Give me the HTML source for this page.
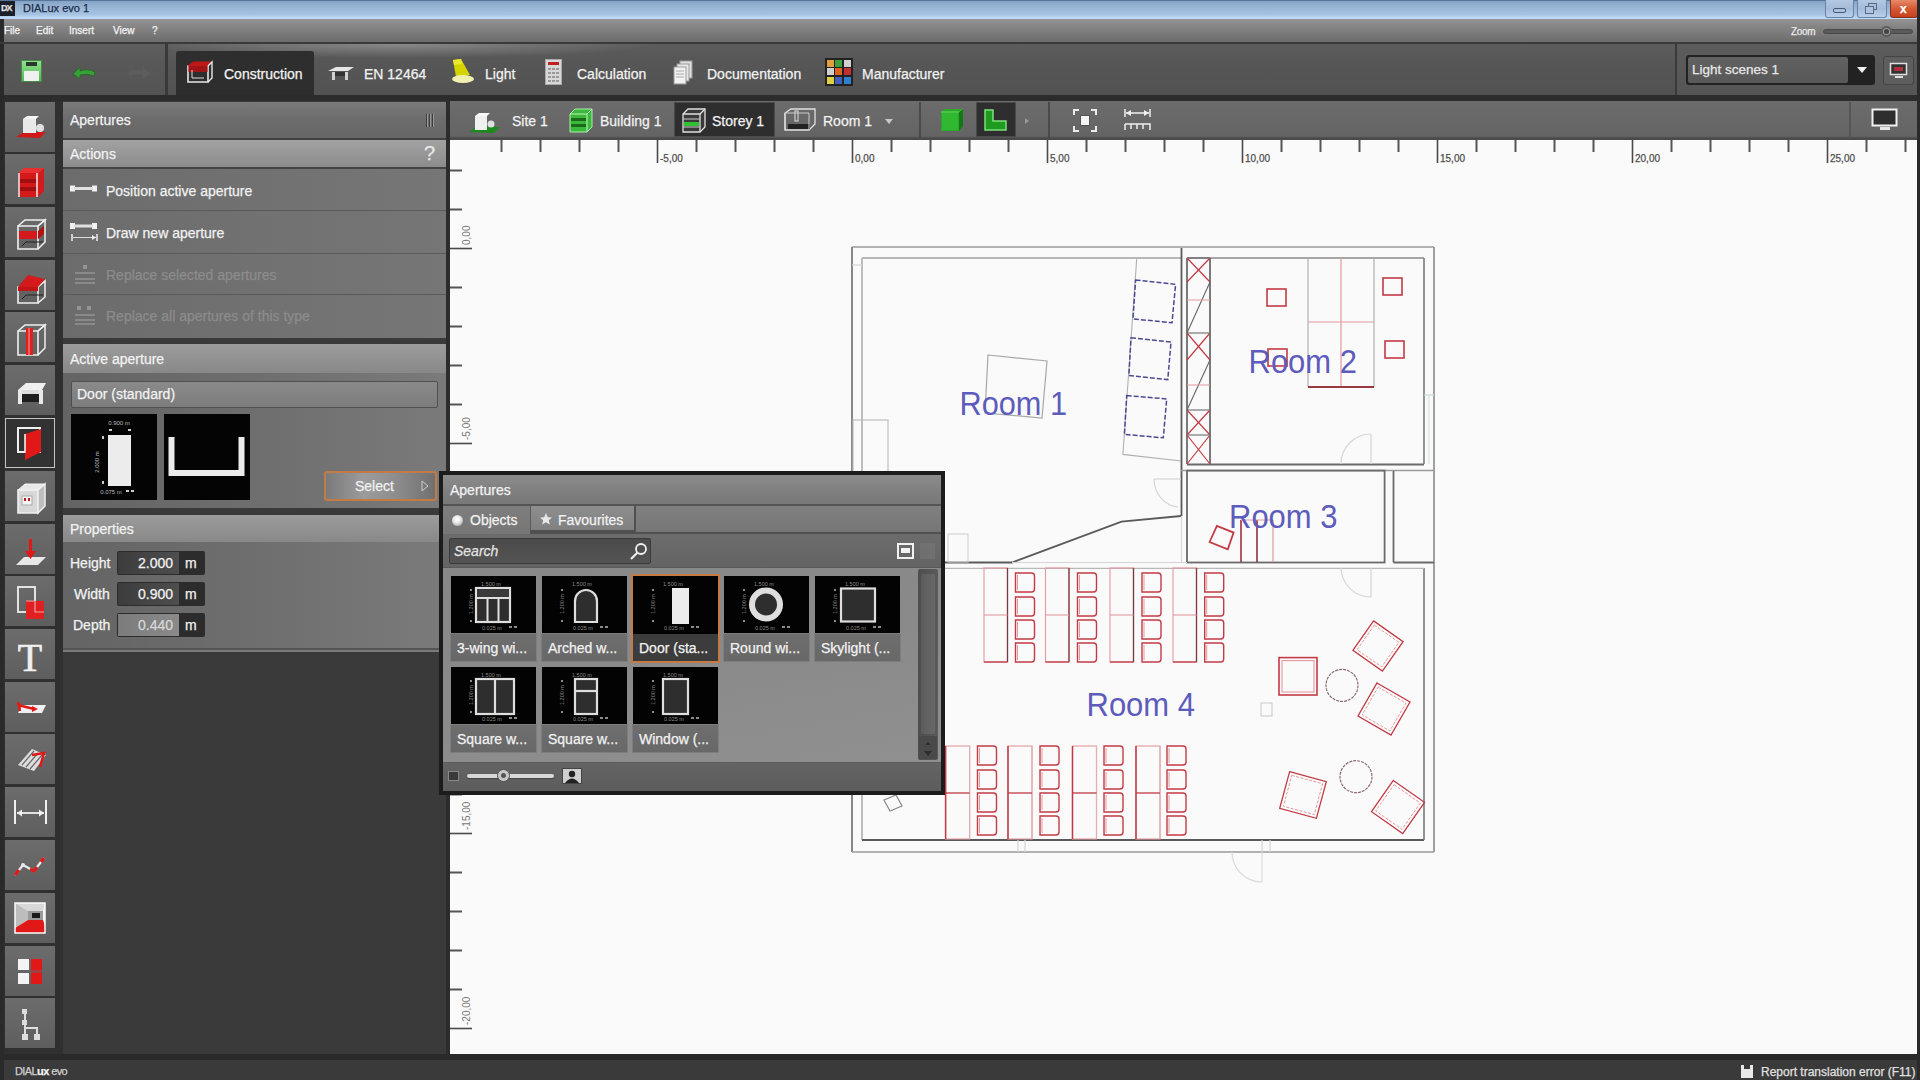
<!DOCTYPE html>
<html><head><meta charset="utf-8">
<style>
*{margin:0;padding:0;box-sizing:border-box}
html,body{width:1920px;height:1080px;overflow:hidden;background:#2e2e2e;font-family:"Liberation Sans",sans-serif;}
.a{position:absolute}
.t{position:absolute;white-space:nowrap;color:#f2f2f2;line-height:1;-webkit-text-stroke:0.25px currentColor;}
svg{position:absolute;overflow:visible}
.lb{position:absolute;left:5px;width:50px;height:50px;background:linear-gradient(#6c6c6c,#5e5e5e);}
</style></head><body>
<!-- ============ TITLE BAR ============ -->
<div class="a" style="left:0;top:0;width:1920px;height:19px;background:linear-gradient(#3e5e86 0,#86a4c6 1.5px,#98b4d3 35%,#a6c2e2 75%,#bad6f4 92%,#c4def8 100%);"></div>
<div class="a" style="left:0;top:1px;width:15px;height:15px;background:#1b1f2a"></div>
<div class="t" style="left:1px;top:4px;font-size:9px;font-weight:bold;color:#e0e0e0;letter-spacing:-1px">DX</div>
<div class="t" style="left:23px;top:3px;font-size:11px;color:#1c2c4a">DIALux evo 1</div>
<div class="a" style="left:1825px;top:0;width:29px;height:18px;border:1px solid #6a84a8;border-top:none;border-radius:0 0 3px 3px;background:linear-gradient(#b4c8e2,#a4bcda 50%,#b8d0ec)"></div>
<div class="a" style="left:1833px;top:8px;width:13px;height:5px;border:1.5px solid #4a5a72;border-radius:2px"></div>
<div class="a" style="left:1857px;top:0;width:30px;height:18px;border:1px solid #6a84a8;border-top:none;border-radius:0 0 3px 3px;background:linear-gradient(#b4c8e2,#a4bcda 50%,#b8d0ec)"></div>
<div class="a" style="left:1868px;top:3px;width:9px;height:7px;border:1.5px solid #5a6a80"></div>
<div class="a" style="left:1865px;top:6px;width:9px;height:8px;border:1.5px solid #5a6a80;background:#aec4e0"></div>
<div class="a" style="left:1890px;top:0;width:28px;height:18px;border:1px solid #8a3020;border-top:none;border-radius:0 0 3px 3px;background:linear-gradient(#e88a6a,#d45a34 50%,#c8401c)"></div>
<div class="t" style="left:1900px;top:3px;font-size:12px;font-weight:bold;color:#fff">x</div>
<div class="a" style="left:1917px;top:0;width:3px;height:1080px;background:#2a2a2a"></div>

<!-- ============ MENU BAR ============ -->
<div class="a" style="left:0;top:19px;width:1917px;height:23px;background:linear-gradient(#949494,#848484 35%,#6c6c6c 100%);"></div>
<div class="a" style="left:0;top:19px;width:4px;height:1061px;background:#2a2a2a"></div>
<div class="t" style="left:4px;top:26px;font-size:10px;color:#f4f4f4">File</div>
<div class="t" style="left:36px;top:26px;font-size:10px;color:#f4f4f4">Edit</div>
<div class="t" style="left:69px;top:26px;font-size:10px;color:#f4f4f4">Insert</div>
<div class="t" style="left:113px;top:26px;font-size:10px;color:#f4f4f4">View</div>
<div class="t" style="left:152px;top:26px;font-size:10px;color:#f4f4f4">?</div>
<div class="t" style="left:1791px;top:27px;font-size:10px;color:#eaeaea;letter-spacing:-0.3px">Zoom</div>
<div class="a" style="left:1823px;top:29px;width:90px;height:5px;border-radius:3px;background:#5a5a5a;border:1px solid #4a4a4a"></div>
<div class="a" style="left:1881px;top:26px;width:11px;height:11px;border-radius:50%;background:#9a9a9a;border:2px solid #5c5c5c"></div>
<div class="a" style="left:1884px;top:29px;width:5px;height:5px;border-radius:50%;background:#444"></div>

<!-- ============ MAIN TOOLBAR ============ -->
<div class="a" style="left:0;top:42px;width:1917px;height:2px;background:#3a3a3a"></div>
<div class="a" style="left:4px;top:44px;width:1913px;height:51px;background:linear-gradient(#5e5e5e,#585858 40%,#545454);"></div>
<div class="a" style="left:168px;top:44px;width:1507px;height:51px;background:linear-gradient(#5c5c5c,#565656 40%,#525252);"></div>
<div class="a" style="left:168px;top:44px;width:600px;height:20px;background:radial-gradient(ellipse 260px 14px at 230px 0,rgba(255,255,255,0.28),rgba(255,255,255,0))"></div>
<div class="a" style="left:165px;top:44px;width:3px;height:51px;background:#3a3a3a"></div>
<div class="a" style="left:1675px;top:44px;width:2px;height:51px;background:#3a3a3a"></div>
<div class="a" style="left:1677px;top:44px;width:240px;height:51px;background:linear-gradient(#5c5c5c,#555);"></div>
<!-- save -->
<div class="a" style="left:21px;top:60px;width:21px;height:22px;background:linear-gradient(#8fe08f,#55b855);border:1px solid #3e8e3e"></div>
<div class="a" style="left:24px;top:71px;width:15px;height:10px;background:#f0f0f0"></div>
<div class="a" style="left:26px;top:62px;width:11px;height:4px;background:#2a3a2a"></div>
<!-- undo -->
<svg style="left:70px;top:62px" width="30" height="20"><path d="M3 12 L10 5 L10 9 Q18 6 25 10 L24 14 Q18 11 10 13 L10 17 Z" fill="#38a038" stroke="#2a6a2a" stroke-width="1"/></svg>
<svg style="left:125px;top:62px" width="30" height="20" opacity="0.25"><path d="M25 12 L18 5 L18 9 Q10 6 3 10 L4 14 Q10 11 18 13 L18 17 Z" fill="#707070"/></svg>
<!-- Construction tab -->
<div class="a" style="left:176px;top:51px;width:138px;height:44px;background:#2f2e2e;border-radius:3px 3px 0 0"></div>
<svg style="left:186px;top:60px" width="28" height="26"><path d="M2 6 L22 6 L22 22 L2 22 Z" fill="none" stroke="#e8e8e8" stroke-width="1.6"/><path d="M2 6 L7 2 L26 2 L22 6" fill="#c01818" stroke="#c01818"/><path d="M22 6 L26 2 L26 18 L22 22" fill="none" stroke="#e8e8e8" stroke-width="1.4"/><rect x="2.5" y="6" width="19" height="6" fill="#a01515"/><path d="M6 10 L6 18 L18 18" fill="none" stroke="#ddd" stroke-width="1"/></svg>
<div class="t" style="left:224px;top:67px;font-size:14px">Construction</div>
<!-- EN 12464 -->
<svg style="left:326px;top:64px" width="30" height="20"><path d="M2 7 L10 3 L28 3 L22 7 Z" fill="#e6e6e6"/><rect x="6" y="8" width="3" height="8" fill="#d0d0d0"/><rect x="19" y="8" width="3" height="8" fill="#d0d0d0"/><rect x="9" y="8" width="10" height="4" fill="#333"/></svg>
<div class="t" style="left:364px;top:67px;font-size:14px">EN 12464</div>
<!-- Light -->
<svg style="left:448px;top:58px" width="30" height="28"><path d="M5 2 L13 1 L22 17 L8 19 Z" fill="#d4d400"/><path d="M5 2 L13 1 L14 6 L6 7 Z" fill="#e8e830"/><ellipse cx="15" cy="21" rx="11" ry="4" fill="#f0f0b0"/></svg>
<div class="t" style="left:485px;top:67px;font-size:14px">Light</div>
<!-- Calculation -->
<svg style="left:545px;top:59px" width="18" height="27"><rect x="0.5" y="0.5" width="16" height="25" fill="#d8d8d8" stroke="#aaa"/><rect x="3" y="3" width="11" height="3" fill="#c02020"/><g fill="#999"><rect x="3" y="9" width="3" height="2"/><rect x="7" y="9" width="3" height="2"/><rect x="11" y="9" width="3" height="2"/><rect x="3" y="13" width="3" height="2"/><rect x="7" y="13" width="3" height="2"/><rect x="11" y="13" width="3" height="2"/><rect x="3" y="17" width="3" height="2"/><rect x="7" y="17" width="3" height="2"/><rect x="11" y="17" width="3" height="2"/><rect x="3" y="21" width="3" height="2"/><rect x="7" y="21" width="3" height="2"/><rect x="11" y="21" width="3" height="2"/></g></svg>
<div class="t" style="left:577px;top:67px;font-size:14px">Calculation</div>
<!-- Documentation -->
<svg style="left:673px;top:60px" width="22" height="25"><rect x="7" y="1" width="12" height="17" fill="#e0e0e0" stroke="#999"/><rect x="4" y="4" width="12" height="17" fill="#e8e8e8" stroke="#999"/><rect x="1" y="7" width="12" height="17" fill="#f2f2f2" stroke="#999"/><g stroke="#aaa"><line x1="3" y1="11" x2="11" y2="11"/><line x1="3" y1="14" x2="11" y2="14"/><line x1="3" y1="17" x2="11" y2="17"/></g></svg>
<div class="t" style="left:707px;top:67px;font-size:14px">Documentation</div>
<!-- Manufacturer -->
<svg style="left:825px;top:58px" width="28" height="28"><rect x="0" y="0" width="28" height="28" fill="#222"/><rect x="2" y="2" width="7" height="7" fill="#e0a040"/><rect x="10" y="2" width="7" height="7" fill="#40a040"/><rect x="19" y="2" width="7" height="7" fill="#d0d0d0"/><rect x="2" y="10" width="7" height="7" fill="#d0d0d0"/><rect x="10" y="10" width="7" height="7" fill="#e06020"/><rect x="19" y="10" width="7" height="7" fill="#c03030"/><rect x="2" y="19" width="7" height="7" fill="#e0d040"/><rect x="10" y="19" width="7" height="7" fill="#4060c0"/><rect x="19" y="19" width="7" height="7" fill="#3080d0"/></svg>
<div class="t" style="left:862px;top:67px;font-size:14px">Manufacturer</div>
<!-- light scenes -->
<div class="a" style="left:1686px;top:55px;width:189px;height:30px;background:#222;border-radius:3px"></div>
<div class="a" style="left:1688px;top:57px;width:160px;height:26px;background:linear-gradient(#626262,#585858);border-radius:2px"></div>
<div class="t" style="left:1692px;top:63px;font-size:13.5px;color:#e8e8e8">Light scenes 1</div>
<svg style="left:1856px;top:66px" width="12" height="8"><path d="M1 1 L11 1 L6 7 Z" fill="#f0f0f0"/></svg>
<div class="a" style="left:1883px;top:56px;width:31px;height:29px;background:#5e5e5e;border:1px solid #444;border-radius:3px"></div>
<svg style="left:1889px;top:62px" width="20" height="18"><rect x="1.5" y="1.5" width="16" height="11" fill="#333" stroke="#e0e0e0" stroke-width="1.5"/><rect x="5" y="5" width="9" height="4" fill="#b03040"/><rect x="6" y="14" width="8" height="2" fill="#ddd"/></svg>

<!-- separator -->
<div class="a" style="left:4px;top:95px;width:1913px;height:6px;background:#2c2c2c"></div>

<!-- ============ LEFT COLUMN ============ -->
<div class="a" style="left:4px;top:101px;width:59px;height:953px;background:#303030"></div>
<div class="lb" style="top:102px"></div>
<svg style="left:10px;top:107px" width="40" height="40"><path d="M6 30 L14 25 L36 25 L30 31 Z" fill="#d01818"/><rect x="13" y="12" width="13" height="14" fill="#e8e8e8"/><path d="M13 12 L17 9 L29 9 L26 12 Z" fill="#f4f4f4"/><circle cx="30" cy="21" r="4" fill="#e0e0e0"/></svg>
<div class="lb" style="top:154px"></div>
<svg style="left:10px;top:159px" width="40" height="40"><path d="M8 14 L28 14 L34 9 L34 32 L28 38 L8 38 Z" fill="#d41a1a"/><path d="M8 14 L14 9 L34 9 L28 14 Z" fill="#e83030"/><rect x="9" y="20" width="19" height="4" fill="#a01010"/><rect x="9" y="28" width="19" height="4" fill="#a01010"/><line x1="9" y1="14" x2="9" y2="38" stroke="#f0f0f0" stroke-width="1.5"/><line x1="27" y1="14" x2="27" y2="38" stroke="#f0f0f0" stroke-width="1.5"/></svg>
<div class="lb" style="top:207px"></div>
<svg style="left:10px;top:212px" width="40" height="40"><path d="M8 14 L28 14 L28 37 L8 37 Z" fill="none" stroke="#f0f0f0" stroke-width="1.6"/><path d="M8 14 L15 8 L35 8 L28 14" fill="none" stroke="#f0f0f0" stroke-width="1.5"/><path d="M28 14 L35 8 L35 30 L28 37" fill="none" stroke="#f0f0f0" stroke-width="1.5"/><rect x="9" y="19" width="18" height="8" fill="#d41a1a"/><path d="M28 19 L34 14 L34 22 L28 27Z" fill="#b01515"/><path d="M12 34 L16 30 L33 30" fill="none" stroke="#222" stroke-width="1"/></svg>
<div class="lb" style="top:260px"></div>
<svg style="left:10px;top:265px" width="40" height="40"><path d="M8 22 L28 22 L28 38 L8 38 Z" fill="none" stroke="#f0f0f0" stroke-width="1.6"/><path d="M28 22 L35 16 L35 32 L28 38" fill="none" stroke="#f0f0f0" stroke-width="1.5"/><path d="M8 22 L18 10 L35 14 L28 22 Z" fill="#d41a1a"/><path d="M8 22 L28 22 L28 26 L8 26Z" fill="#c01515"/><path d="M12 34 L16 30 L33 30" fill="none" stroke="#222" stroke-width="1"/></svg>
<div class="lb" style="top:312px"></div>
<svg style="left:10px;top:317px" width="40" height="40"><path d="M8 14 L28 14 L28 38 L8 38 Z" fill="none" stroke="#f0f0f0" stroke-width="1.6"/><path d="M8 14 L15 8 L35 8 L28 14" fill="none" stroke="#f0f0f0" stroke-width="1.5"/><path d="M28 14 L35 8 L35 31 L28 38" fill="none" stroke="#f0f0f0" stroke-width="1.5"/><rect x="16" y="11" width="7" height="27" fill="#e02020"/><rect x="18" y="11" width="2" height="27" fill="#f06060"/></svg>
<div class="lb" style="top:365px"></div>
<svg style="left:10px;top:370px" width="40" height="40"><path d="M8 20 L16 13 L36 13 L32 20 Z" fill="#f0f0f0"/><path d="M8 20 L32 20 L32 26 L8 26Z" fill="#ddd"/><rect x="8" y="20" width="4" height="14" fill="#e8e8e8"/><rect x="29" y="20" width="4" height="14" fill="#e8e8e8"/><rect x="12" y="24" width="17" height="8" fill="#1e1e1e"/></svg>
<div class="a" style="left:5px;top:418px;width:50px;height:50px;background:#323232;border:1px solid #c4c4c4"></div>
<svg style="left:10px;top:423px" width="40" height="40"><rect x="8" y="5" width="22" height="24" fill="none" stroke="#f0f0f0" stroke-width="2"/><path d="M15 11 L31 6 L31 29 L15 37 Z" fill="#e01818"/><path d="M15 11 L15 29 L8 29" fill="none" stroke="#f0f0f0" stroke-width="1.6"/></svg>
<div class="lb" style="top:471px"></div>
<svg style="left:10px;top:476px" width="40" height="40"><path d="M8 14 L28 14 L28 37 L8 37 Z" fill="#d8d8d8" stroke="#f0f0f0" stroke-width="1.6"/><path d="M8 14 L15 8 L35 8 L28 14Z" fill="#e8e8e8" stroke="#f4f4f4"/><path d="M28 14 L35 8 L35 30 L28 37Z" fill="#bdbdbd" stroke="#f0f0f0" stroke-width="1.5"/><rect x="12" y="20" width="10" height="9" fill="#f4f4f4" stroke="#aaa"/><rect x="14" y="22" width="2" height="3" fill="#c01818"/><rect x="18" y="22" width="2" height="3" fill="#c01818"/></svg>
<div class="lb" style="top:524px"></div>
<svg style="left:10px;top:529px" width="40" height="40"><path d="M6 36 L14 28 L36 28 L28 36 Z" fill="#e8e8e8"/><rect x="19" y="10" width="3" height="16" fill="#e01818"/><path d="M15 22 L26 22 L20.5 30 Z" fill="#e01818"/></svg>
<div class="lb" style="top:576px"></div>
<svg style="left:10px;top:581px" width="40" height="40"><rect x="8" y="6" width="17" height="25" fill="none" stroke="#f0f0f0" stroke-width="1.8"/><rect x="16" y="20" width="18" height="18" fill="#e02020"/><path d="M16 20 L25 20 L25 31 L34 31" fill="none" stroke="#f0a0a0" stroke-width="1.2"/></svg>
<div class="lb" style="top:629px"></div>
<svg style="left:10px;top:634px" width="40" height="40"><text x="20" y="37" font-family="Liberation Serif" font-size="40" fill="#f0f0f0" text-anchor="middle" stroke="#f0f0f0" stroke-width="0.6">T</text></svg>
<div class="lb" style="top:682px"></div>
<svg style="left:10px;top:687px" width="40" height="40"><path d="M8 26 L12 18 L36 18 L32 26 Z" fill="#f0f0f0"/><path d="M8 18 L24 22" stroke="#e01818" stroke-width="2.5"/><path d="M8 15 L10 24" stroke="#e01818" stroke-width="2.5"/><path d="M22 19 L28 22 L22 25Z" fill="#e01818"/></svg>
<div class="lb" style="top:734px"></div>
<svg style="left:10px;top:739px" width="40" height="40"><path d="M8 26 L22 10 L36 16 L24 32 Z" fill="#ddd"/><g stroke="#666" stroke-width="1.2"><line x1="12" y1="26" x2="24" y2="12"/><line x1="16" y1="28" x2="28" y2="14"/><line x1="20" y1="30" x2="32" y2="16"/></g><path d="M22 16 L34 14 L30 28" fill="none" stroke="#e01818" stroke-width="2.5"/></svg>
<div class="lb" style="top:787px"></div>
<svg style="left:10px;top:792px" width="40" height="40"><line x1="5" y1="8" x2="5" y2="32" stroke="#f0f0f0" stroke-width="2"/><line x1="36" y1="8" x2="36" y2="32" stroke="#f0f0f0" stroke-width="2"/><line x1="7" y1="21" x2="34" y2="21" stroke="#f0f0f0" stroke-width="1.8"/><path d="M7 21 L12 17.5 L12 24.5Z" fill="#f0f0f0"/><path d="M34 21 L29 17.5 L29 24.5Z" fill="#f0f0f0"/></svg>
<div class="lb" style="top:840px"></div>
<svg style="left:10px;top:845px" width="40" height="40"><path d="M5 30 L13 20 L24 26 L34 13" fill="none" stroke="#e8e8e8" stroke-width="2.2"/><path d="M5 30 L9 25 M20 24 L24 26 L27 22 M31 17 L34 13" fill="none" stroke="#e01818" stroke-width="3"/><circle cx="13" cy="20" r="2" fill="#e8e8e8"/></svg>
<div class="lb" style="top:893px"></div>
<svg style="left:10px;top:898px" width="40" height="40"><rect x="5" y="5" width="30" height="30" fill="#f4f4f4"/><path d="M5 5 L18 13 L33 13 L35 5Z" fill="#d8d8d8"/><path d="M5 5 L18 13 L18 22 L5 30Z" fill="#bdbdbd"/><rect x="18" y="13" width="15" height="9" fill="#9a9a9a"/><rect x="22" y="15" width="8" height="5" fill="#1a1a1a"/><path d="M5 35 L5 30 L18 22 L33 22 L35 28 L35 35Z" fill="#e01818"/><rect x="5" y="5" width="30" height="30" fill="none" stroke="#fafafa" stroke-width="1.5"/></svg>
<div class="lb" style="top:946px"></div>
<svg style="left:10px;top:951px" width="40" height="40"><rect x="8" y="8" width="11" height="11" fill="#f4f4f4"/><rect x="8" y="22" width="11" height="11" fill="#f4f4f4"/><rect x="21" y="8" width="11" height="11" fill="#e01818"/><rect x="21" y="22" width="11" height="11" fill="#e01818"/><rect x="21" y="19" width="11" height="3" fill="#a04040"/></svg>
<div class="lb" style="top:998px"></div>
<svg style="left:10px;top:1003px" width="40" height="40"><rect x="12" y="6" width="5" height="5" fill="#ddd"/><rect x="14" y="11" width="2" height="20" fill="#ddd"/><rect x="12" y="17" width="5" height="5" fill="#ddd"/><rect x="14" y="24" width="14" height="2" fill="#ddd"/><rect x="26" y="24" width="2" height="8" fill="#ddd"/><rect x="12" y="31" width="6" height="6" fill="#ddd"/><rect x="24" y="31" width="6" height="6" fill="#ddd"/></svg>

<!-- ============ LEFT PANEL ============ -->
<div class="a" style="left:63px;top:101px;width:387px;height:953px;background:#3a3a3a"></div>
<!-- Apertures header -->
<div class="a" style="left:63px;top:102px;width:383px;height:36px;background:linear-gradient(#7a7a7a,#6c6c6c 50%,#666)"></div>
<div class="t" style="left:70px;top:113px;font-size:14px">Apertures</div>
<div class="a" style="left:426px;top:114px;width:2px;height:13px;background:#3c3c3c"></div>
<div class="a" style="left:429px;top:114px;width:2px;height:13px;background:#3c3c3c"></div>
<div class="a" style="left:432px;top:114px;width:2px;height:13px;background:#3c3c3c"></div>
<div class="a" style="left:427px;top:114px;width:1px;height:13px;background:#999"></div>
<div class="a" style="left:430px;top:114px;width:1px;height:13px;background:#999"></div>
<div class="a" style="left:433px;top:114px;width:1px;height:13px;background:#999"></div>
<div class="a" style="left:63px;top:138px;width:383px;height:2px;background:#404040"></div>
<!-- Actions header -->
<div class="a" style="left:63px;top:140px;width:383px;height:27px;background:linear-gradient(#a2a2a2,#959595 60%,#8c8c8c)"></div>
<div class="t" style="left:70px;top:147px;font-size:14px">Actions</div>
<div class="t" style="left:424px;top:143px;font-size:20px;color:#e8e8e8">?</div>
<div class="a" style="left:63px;top:167px;width:383px;height:2px;background:#444"></div>
<!-- items -->
<div class="a" style="left:63px;top:169px;width:383px;height:169px;background:#6a6a6a"></div>
<div class="a" style="left:63px;top:169px;width:383px;height:41px;background:linear-gradient(90deg,#6c6c6c,#727272 60%,#767676)"></div>
<div class="a" style="left:63px;top:211px;width:383px;height:42px;background:linear-gradient(90deg,#6c6c6c,#727272 60%,#767676)"></div>
<div class="a" style="left:63px;top:254px;width:383px;height:40px;background:linear-gradient(90deg,#6c6c6c,#727272 60%,#767676)"></div>
<div class="a" style="left:63px;top:295px;width:383px;height:43px;background:linear-gradient(90deg,#6c6c6c,#727272 60%,#767676)"></div>
<div class="a" style="left:63px;top:210px;width:383px;height:1px;background:#5a5a5a"></div>
<div class="a" style="left:63px;top:253px;width:383px;height:1px;background:#5a5a5a"></div>
<div class="a" style="left:63px;top:294px;width:383px;height:1px;background:#5a5a5a"></div>
<svg style="left:69px;top:184px" width="30" height="12"><rect x="1" y="1.5" width="5" height="6" fill="#f0f0f0"/><rect x="23" y="1.5" width="5" height="6" fill="#f0f0f0"/><rect x="5" y="3" width="19" height="3" fill="#e0e0e0"/></svg>
<div class="t" style="left:106px;top:184px;font-size:14px">Position active aperture</div>
<svg style="left:69px;top:222px" width="30" height="22"><rect x="1" y="1" width="5" height="6" fill="#f0f0f0"/><rect x="23" y="1" width="5" height="6" fill="#f0f0f0"/><rect x="5" y="2.5" width="19" height="3" fill="#e0e0e0"/><line x1="3" y1="12" x2="3" y2="19" stroke="#eee" stroke-width="1.5"/><line x1="28" y1="12" x2="28" y2="19" stroke="#eee" stroke-width="1.5"/><line x1="4" y1="15.5" x2="27" y2="15.5" stroke="#ddd" stroke-width="1"/><path d="M27 15.5 L23 13 L23 18Z" fill="#eee"/></svg>
<div class="t" style="left:106px;top:226px;font-size:14px">Draw new aperture</div>
<svg style="left:73px;top:264px" width="24" height="22" opacity="0.35"><rect x="10" y="1" width="4" height="4" fill="#ddd"/><line x1="2" y1="9" x2="22" y2="9" stroke="#ddd" stroke-width="1.5"/><line x1="2" y1="15" x2="22" y2="15" stroke="#ddd" stroke-width="1.5"/><line x1="2" y1="19" x2="22" y2="19" stroke="#ddd" stroke-width="1.5"/></svg>
<div class="t" style="left:106px;top:268px;font-size:14px;color:#8c8c8c">Replace selected apertures</div>
<svg style="left:73px;top:305px" width="24" height="22" opacity="0.35"><rect x="4" y="1" width="4" height="4" fill="#ddd"/><rect x="14" y="1" width="4" height="4" fill="#ddd"/><line x1="2" y1="10" x2="22" y2="10" stroke="#ddd" stroke-width="1.5"/><line x1="2" y1="15" x2="22" y2="15" stroke="#ddd" stroke-width="1.5"/><line x1="2" y1="19" x2="22" y2="19" stroke="#ddd" stroke-width="1.5"/></svg>
<div class="t" style="left:106px;top:309px;font-size:14px;color:#8c8c8c">Replace all apertures of this type</div>
<!-- Active aperture -->
<div class="a" style="left:63px;top:344px;width:383px;height:29px;background:linear-gradient(#9c9c9c,#909090 60%,#888)"></div>
<div class="t" style="left:70px;top:352px;font-size:14px">Active aperture</div>
<div class="a" style="left:63px;top:373px;width:383px;height:135px;background:linear-gradient(90deg,#646464,#6e6e6e 50%,#7a7a7a)"></div>
<div class="a" style="left:71px;top:381px;width:367px;height:27px;background:linear-gradient(#8a8a8a,#7c7c7c);border:1px solid #505050;border-radius:2px"></div>
<div class="t" style="left:77px;top:387px;font-size:14px">Door (standard)</div>
<div class="a" style="left:71px;top:414px;width:86px;height:86px;background:#040404"></div>
<svg style="left:71px;top:414px" width="86" height="86"><rect x="37" y="21" width="23" height="51" fill="#ececec"/><text x="48" y="11" font-size="6" fill="#bbb" font-family="Liberation Sans" text-anchor="middle">0.900 m</text><rect x="38" y="15" width="3" height="2" fill="#ccc"/><rect x="57" y="15" width="3" height="2" fill="#ccc"/><rect x="31" y="22" width="2" height="3" fill="#ccc"/><rect x="31" y="67" width="2" height="3" fill="#ccc"/><rect x="55" y="76" width="3" height="2" fill="#ccc"/><rect x="60" y="76" width="3" height="2" fill="#ccc"/><text x="28" y="48" font-size="6" fill="#bbb" font-family="Liberation Sans" transform="rotate(-90 28 48)" text-anchor="middle">2.000 m</text><text x="40" y="80" font-size="6" fill="#bbb" font-family="Liberation Sans" text-anchor="middle">0.075 m</text></svg>
<div class="a" style="left:164px;top:414px;width:86px;height:86px;background:#040404"></div>
<svg style="left:164px;top:414px" width="86" height="86"><path d="M7.5 23 L7.5 59 L77.5 59 L77.5 23" fill="none" stroke="#ececec" stroke-width="6" stroke-linejoin="miter"/></svg>
<!-- select button -->
<div class="a" style="left:324px;top:471px;width:113px;height:30px;border:2px solid #c47a44;border-radius:3px;background:linear-gradient(90deg,#7a7a7a,#9c9c9c 35%,#8c8c8c 65%,#707070)"></div>
<div class="t" style="left:355px;top:479px;font-size:14px">Select</div>
<svg style="left:421px;top:480px" width="8" height="12"><path d="M1 1 L7 6 L1 11Z" fill="none" stroke="#ccc" stroke-width="1"/></svg>
<!-- Properties -->
<div class="a" style="left:63px;top:515px;width:376px;height:27px;background:linear-gradient(#9c9c9c,#909090 60%,#888)"></div>
<div class="t" style="left:70px;top:522px;font-size:14px">Properties</div>
<div class="a" style="left:63px;top:542px;width:376px;height:106px;background:linear-gradient(90deg,#646464,#6e6e6e 50%,#7a7a7a)"></div>
<div class="a" style="left:63px;top:648px;width:376px;height:2px;background:#555"></div>
<div class="a" style="left:63px;top:650px;width:376px;height:2px;background:#7a7a7a"></div>
<div class="t" style="left:70px;top:556px;font-size:14px">Height</div>
<div class="t" style="left:74px;top:587px;font-size:14px">Width</div>
<div class="t" style="left:73px;top:618px;font-size:14px">Depth</div>
<div class="a" style="left:117px;top:551px;width:88px;height:24px;background:#2c2c2c;border-radius:2px"></div>
<div class="a" style="left:118px;top:552px;width:61px;height:22px;background:linear-gradient(90deg,#3c3c3c,#4e4e4e)"></div>
<div class="t" style="left:138px;top:556px;font-size:14px">2.000</div>
<div class="t" style="left:185px;top:556px;font-size:14px">m</div>
<div class="a" style="left:117px;top:582px;width:88px;height:24px;background:#2c2c2c;border-radius:2px"></div>
<div class="a" style="left:118px;top:583px;width:61px;height:22px;background:linear-gradient(90deg,#3c3c3c,#4e4e4e)"></div>
<div class="t" style="left:138px;top:587px;font-size:14px">0.900</div>
<div class="t" style="left:185px;top:587px;font-size:14px">m</div>
<div class="a" style="left:117px;top:613px;width:88px;height:24px;background:#2c2c2c;border-radius:2px"></div>
<div class="a" style="left:118px;top:614px;width:61px;height:22px;background:linear-gradient(90deg,#7c7c7c,#8a8a8a)"></div>
<div class="t" style="left:138px;top:618px;font-size:14px;color:#d8d8d8">0.440</div>
<div class="t" style="left:185px;top:618px;font-size:14px">m</div>


<!-- ============ VIEW TOOLBAR ============ -->
<div class="a" style="left:446px;top:101px;width:4px;height:953px;background:#2c2c2c"></div>
<div class="a" style="left:450px;top:101px;width:1467px;height:39px;background:linear-gradient(#6c6c6c,#646464 90%,#4a4a4a 95%,#4a4a4a);"></div>

<!-- ============ CANVAS ============ -->
<div class="a" style="left:450px;top:140px;width:1467px;height:914px;background:#fafafa"></div>
<!--PLAN-->
<svg style="left:0;top:0" width="1920" height="1080"><line x1="852" y1="247" x2="1434" y2="247" stroke="#9a9a9a" stroke-width="1.6" /><line x1="852" y1="247" x2="852" y2="852" stroke="#7a7a7a" stroke-width="1.8" /><line x1="1434" y1="247" x2="1434" y2="852" stroke="#8a8a8a" stroke-width="1.6" /><line x1="852" y1="852" x2="1434" y2="852" stroke="#9a9a9a" stroke-width="1.6" /><line x1="862" y1="258" x2="1181" y2="258" stroke="#a0a0a0" stroke-width="1.5" /><line x1="862" y1="258" x2="862" y2="840" stroke="#a8a8a8" stroke-width="1.5" /><line x1="862" y1="840" x2="1424" y2="840" stroke="#5a5a5a" stroke-width="1.8" /><line x1="1424" y1="258" x2="1424" y2="464" stroke="#7a7a7a" stroke-width="1.6" /><line x1="1424" y1="568" x2="1424" y2="840" stroke="#7a7a7a" stroke-width="1.6" /><line x1="1210" y1="258" x2="1424" y2="258" stroke="#8a8a8a" stroke-width="1.5" /><line x1="1181.5" y1="248" x2="1181.5" y2="516" stroke="#5a5a5a" stroke-width="1.8" /><line x1="1187" y1="258" x2="1187" y2="464" stroke="#5a5a5a" stroke-width="1.6" /><line x1="1210" y1="258" x2="1210" y2="464" stroke="#5a5a5a" stroke-width="1.6" /><line x1="1187" y1="258" x2="1210" y2="258" stroke="#5a5a5a" stroke-width="1.3" /><line x1="1187" y1="464.5" x2="1424" y2="464.5" stroke="#6a6a6a" stroke-width="1.8" /><line x1="1181" y1="470.5" x2="1434" y2="470.5" stroke="#9a9a9a" stroke-width="1.4" /><polyline points="945,562.5 1012,562.5 1121.5,521.6 1181,516" fill="none" stroke="#5a5a5a" stroke-width="1.8" /><rect x="1187" y="470.6" width="197.6" height="91.9" fill="none" stroke="#6a6a6a" stroke-width="1.8" /><line x1="1393.5" y1="471" x2="1393.5" y2="562.5" stroke="#6a6a6a" stroke-width="1.8" /><line x1="1393.5" y1="562.5" x2="1434" y2="562.5" stroke="#6a6a6a" stroke-width="1.8" /><line x1="1012" y1="562.5" x2="1187" y2="562.5" stroke="#d4d4d4" stroke-width="1.2" /><line x1="1181.5" y1="516" x2="1181.5" y2="562.5" stroke="#d8d8d8" stroke-width="1.2" /><line x1="945" y1="568.3" x2="1424" y2="568.3" stroke="#b8b8b8" stroke-width="1.3" /><line x1="852" y1="265" x2="862" y2="265" stroke="#d6d6d6" stroke-width="1.2" /><line x1="1018" y1="840" x2="1018" y2="852" stroke="#d6d6d6" stroke-width="1.2" /><line x1="1025" y1="840" x2="1025" y2="852" stroke="#d6d6d6" stroke-width="1.2" /><line x1="1262" y1="840" x2="1262" y2="852" stroke="#d6d6d6" stroke-width="1.2" /><line x1="1270" y1="840" x2="1270" y2="852" stroke="#d6d6d6" stroke-width="1.2" /><line x1="1424" y1="395" x2="1434" y2="395" stroke="#c8dcd8" stroke-width="1.2" /><line x1="1429" y1="395" x2="1429" y2="464" stroke="#d0e4e0" stroke-width="1.2" /><polygon points="988,355 1047,361 1042,418 985,413" fill="none" stroke="#a8a8a8" stroke-width="1.2" /><polyline points="1136.7,259 1122.9,454.4 1181,461" fill="none" stroke="#b0b0b0" stroke-width="1.1" /><polygon points="1135.6,280 1175.6,284.4 1172,322.7 1133,318.9" fill="none" stroke="#4a4a90" stroke-width="1.5" stroke-dasharray="5 2"/><polygon points="1131,337.8 1171,342 1167.8,379.6 1128.9,375.6" fill="none" stroke="#4a4a90" stroke-width="1.5" stroke-dasharray="5 2"/><polygon points="1126.7,395.6 1166.7,398.9 1163.3,437.8 1124.4,434.4" fill="none" stroke="#4a4a90" stroke-width="1.5" stroke-dasharray="5 2"/><rect x="853" y="420" width="35" height="60" fill="none" stroke="#b8b8b8" stroke-width="1.1" /><path d="M1154 479 A27 28 0 0 0 1178 507" fill="none" stroke="#d6d6d6" stroke-width="1.2"/><line x1="1154" y1="479" x2="1181" y2="479" stroke="#d6d6d6" stroke-width="1.2" /><rect x="948" y="534" width="20" height="28" fill="none" stroke="#d0d0d0" stroke-width="1.1" /><line x1="1187" y1="258" x2="1210" y2="282" stroke="#c23a44" stroke-width="1.2" /><line x1="1210" y1="258" x2="1187" y2="282" stroke="#c23a44" stroke-width="1.2" /><line x1="1187" y1="258" x2="1210" y2="258" stroke="#777" stroke-width="1.2" /><line x1="1187" y1="333" x2="1210" y2="360" stroke="#c23a44" stroke-width="1.2" /><line x1="1210" y1="333" x2="1187" y2="360" stroke="#c23a44" stroke-width="1.2" /><line x1="1187" y1="333" x2="1210" y2="333" stroke="#777" stroke-width="1.2" /><line x1="1187" y1="410" x2="1210" y2="435" stroke="#c23a44" stroke-width="1.2" /><line x1="1210" y1="410" x2="1187" y2="435" stroke="#c23a44" stroke-width="1.2" /><line x1="1187" y1="410" x2="1210" y2="410" stroke="#777" stroke-width="1.2" /><line x1="1187" y1="435" x2="1210" y2="464" stroke="#c23a44" stroke-width="1.2" /><line x1="1210" y1="435" x2="1187" y2="464" stroke="#c23a44" stroke-width="1.2" /><line x1="1187" y1="435" x2="1210" y2="435" stroke="#777" stroke-width="1.2" /><line x1="1210" y1="282" x2="1187" y2="333" stroke="#666" stroke-width="1.1" /><line x1="1210" y1="360" x2="1187" y2="410" stroke="#666" stroke-width="1.1" /><line x1="1187" y1="300" x2="1210" y2="300" stroke="#e29aa0" stroke-width="1" /><line x1="1187" y1="385" x2="1210" y2="385" stroke="#e29aa0" stroke-width="1" /><rect x="1267" y="289" width="19" height="17" fill="none" stroke="#c23a44" stroke-width="1.6" /><rect x="1383" y="278" width="19" height="17" fill="none" stroke="#c23a44" stroke-width="1.6" /><rect x="1385" y="341" width="19" height="17" fill="none" stroke="#c23a44" stroke-width="1.6" /><rect x="1268" y="349" width="19" height="17" fill="none" stroke="#c23a44" stroke-width="1.6" /><line x1="1308" y1="258" x2="1308" y2="387" stroke="#aaa" stroke-width="1.1" /><line x1="1374" y1="258" x2="1374" y2="387" stroke="#aaa" stroke-width="1.1" /><line x1="1341" y1="258" x2="1341" y2="387" stroke="#e29aa0" stroke-width="1.2" /><line x1="1308" y1="322" x2="1374" y2="322" stroke="#e29aa0" stroke-width="1.2" /><line x1="1308" y1="387" x2="1374" y2="387" stroke="#9a3a40" stroke-width="1.8" /><path d="M1341 464 A30 30 0 0 1 1371 434" fill="none" stroke="#d6d6d6" stroke-width="1.2"/><line x1="1371" y1="434" x2="1371" y2="464" stroke="#d6d6d6" stroke-width="1.2" /><polygon points="1209.6,542 1216.9,526 1233.6,532.6 1227.8,549.4" fill="none" stroke="#c23a44" stroke-width="1.8" /><line x1="1241" y1="520" x2="1241" y2="562" stroke="#a03040" stroke-width="1.6" /><line x1="1257" y1="520" x2="1257" y2="562" stroke="#8a3040" stroke-width="1.6" /><line x1="1273" y1="520" x2="1273" y2="562" stroke="#e29aa0" stroke-width="1.2" /><line x1="1241" y1="520" x2="1273" y2="520" stroke="#e29aa0" stroke-width="1" /><rect x="984" y="568" width="23.5" height="94" fill="none" stroke="#e29aa0" stroke-width="1.1" /><line x1="1007.5" y1="568" x2="1007.5" y2="662" stroke="#7a3a40" stroke-width="1.3" /><line x1="984" y1="662" x2="1007.5" y2="662" stroke="#c23a44" stroke-width="1.3" /><line x1="984" y1="615" x2="1007.5" y2="615" stroke="#e29aa0" stroke-width="1.1" /><rect x="1045.5" y="568" width="23.5" height="94" fill="none" stroke="#e29aa0" stroke-width="1.1" /><line x1="1069.0" y1="568" x2="1069.0" y2="662" stroke="#7a3a40" stroke-width="1.3" /><line x1="1045.5" y1="662" x2="1069.0" y2="662" stroke="#c23a44" stroke-width="1.3" /><line x1="1045.5" y1="615" x2="1069.0" y2="615" stroke="#e29aa0" stroke-width="1.1" /><rect x="1110" y="568" width="23.5" height="94" fill="none" stroke="#e29aa0" stroke-width="1.1" /><line x1="1133.5" y1="568" x2="1133.5" y2="662" stroke="#7a3a40" stroke-width="1.3" /><line x1="1110" y1="662" x2="1133.5" y2="662" stroke="#c23a44" stroke-width="1.3" /><line x1="1110" y1="615" x2="1133.5" y2="615" stroke="#e29aa0" stroke-width="1.1" /><rect x="1173" y="568" width="23.5" height="94" fill="none" stroke="#e29aa0" stroke-width="1.1" /><line x1="1196.5" y1="568" x2="1196.5" y2="662" stroke="#7a3a40" stroke-width="1.3" /><line x1="1173" y1="662" x2="1196.5" y2="662" stroke="#c23a44" stroke-width="1.3" /><line x1="1173" y1="615" x2="1196.5" y2="615" stroke="#e29aa0" stroke-width="1.1" /><path d="M1015.5 573 L1031.5 573 Q1034.5 573 1034.5 576 L1034.5 589 Q1034.5 592 1031.5 592 L1015.5 592 Z" fill="none" stroke="#c23a44" stroke-width="1.4"/><line x1="1017.5" y1="575" x2="1017.5" y2="590" stroke="#e29aa0" stroke-width="1" /><path d="M1015.5 597 L1031.5 597 Q1034.5 597 1034.5 600 L1034.5 613 Q1034.5 616 1031.5 616 L1015.5 616 Z" fill="none" stroke="#c23a44" stroke-width="1.4"/><line x1="1017.5" y1="599" x2="1017.5" y2="614" stroke="#e29aa0" stroke-width="1" /><path d="M1015.5 620 L1031.5 620 Q1034.5 620 1034.5 623 L1034.5 636 Q1034.5 639 1031.5 639 L1015.5 639 Z" fill="none" stroke="#c23a44" stroke-width="1.4"/><line x1="1017.5" y1="622" x2="1017.5" y2="637" stroke="#e29aa0" stroke-width="1" /><path d="M1015.5 643 L1031.5 643 Q1034.5 643 1034.5 646 L1034.5 659 Q1034.5 662 1031.5 662 L1015.5 662 Z" fill="none" stroke="#c23a44" stroke-width="1.4"/><line x1="1017.5" y1="645" x2="1017.5" y2="660" stroke="#e29aa0" stroke-width="1" /><path d="M1077.5 573 L1093.5 573 Q1096.5 573 1096.5 576 L1096.5 589 Q1096.5 592 1093.5 592 L1077.5 592 Z" fill="none" stroke="#c23a44" stroke-width="1.4"/><line x1="1079.5" y1="575" x2="1079.5" y2="590" stroke="#e29aa0" stroke-width="1" /><path d="M1077.5 597 L1093.5 597 Q1096.5 597 1096.5 600 L1096.5 613 Q1096.5 616 1093.5 616 L1077.5 616 Z" fill="none" stroke="#c23a44" stroke-width="1.4"/><line x1="1079.5" y1="599" x2="1079.5" y2="614" stroke="#e29aa0" stroke-width="1" /><path d="M1077.5 620 L1093.5 620 Q1096.5 620 1096.5 623 L1096.5 636 Q1096.5 639 1093.5 639 L1077.5 639 Z" fill="none" stroke="#c23a44" stroke-width="1.4"/><line x1="1079.5" y1="622" x2="1079.5" y2="637" stroke="#e29aa0" stroke-width="1" /><path d="M1077.5 643 L1093.5 643 Q1096.5 643 1096.5 646 L1096.5 659 Q1096.5 662 1093.5 662 L1077.5 662 Z" fill="none" stroke="#c23a44" stroke-width="1.4"/><line x1="1079.5" y1="645" x2="1079.5" y2="660" stroke="#e29aa0" stroke-width="1" /><path d="M1142 573 L1158 573 Q1161 573 1161 576 L1161 589 Q1161 592 1158 592 L1142 592 Z" fill="none" stroke="#c23a44" stroke-width="1.4"/><line x1="1144" y1="575" x2="1144" y2="590" stroke="#e29aa0" stroke-width="1" /><path d="M1142 597 L1158 597 Q1161 597 1161 600 L1161 613 Q1161 616 1158 616 L1142 616 Z" fill="none" stroke="#c23a44" stroke-width="1.4"/><line x1="1144" y1="599" x2="1144" y2="614" stroke="#e29aa0" stroke-width="1" /><path d="M1142 620 L1158 620 Q1161 620 1161 623 L1161 636 Q1161 639 1158 639 L1142 639 Z" fill="none" stroke="#c23a44" stroke-width="1.4"/><line x1="1144" y1="622" x2="1144" y2="637" stroke="#e29aa0" stroke-width="1" /><path d="M1142 643 L1158 643 Q1161 643 1161 646 L1161 659 Q1161 662 1158 662 L1142 662 Z" fill="none" stroke="#c23a44" stroke-width="1.4"/><line x1="1144" y1="645" x2="1144" y2="660" stroke="#e29aa0" stroke-width="1" /><path d="M1204.7 573 L1220.7 573 Q1223.7 573 1223.7 576 L1223.7 589 Q1223.7 592 1220.7 592 L1204.7 592 Z" fill="none" stroke="#c23a44" stroke-width="1.4"/><line x1="1206.7" y1="575" x2="1206.7" y2="590" stroke="#e29aa0" stroke-width="1" /><path d="M1204.7 597 L1220.7 597 Q1223.7 597 1223.7 600 L1223.7 613 Q1223.7 616 1220.7 616 L1204.7 616 Z" fill="none" stroke="#c23a44" stroke-width="1.4"/><line x1="1206.7" y1="599" x2="1206.7" y2="614" stroke="#e29aa0" stroke-width="1" /><path d="M1204.7 620 L1220.7 620 Q1223.7 620 1223.7 623 L1223.7 636 Q1223.7 639 1220.7 639 L1204.7 639 Z" fill="none" stroke="#c23a44" stroke-width="1.4"/><line x1="1206.7" y1="622" x2="1206.7" y2="637" stroke="#e29aa0" stroke-width="1" /><path d="M1204.7 643 L1220.7 643 Q1223.7 643 1223.7 646 L1223.7 659 Q1223.7 662 1220.7 662 L1204.7 662 Z" fill="none" stroke="#c23a44" stroke-width="1.4"/><line x1="1206.7" y1="645" x2="1206.7" y2="660" stroke="#e29aa0" stroke-width="1" /><rect x="945.6" y="746" width="24" height="93" fill="none" stroke="#e29aa0" stroke-width="1.1" /><line x1="945.6" y1="746" x2="945.6" y2="839" stroke="#c23a44" stroke-width="1.5" /><line x1="969.6" y1="746" x2="969.6" y2="839" stroke="#e0b0b4" stroke-width="1.2" /><line x1="945.6" y1="793" x2="969.6" y2="793" stroke="#c23a44" stroke-width="1.3" /><rect x="1008" y="746" width="24" height="93" fill="none" stroke="#e29aa0" stroke-width="1.1" /><line x1="1008" y1="746" x2="1008" y2="839" stroke="#c23a44" stroke-width="1.5" /><line x1="1032" y1="746" x2="1032" y2="839" stroke="#e0b0b4" stroke-width="1.2" /><line x1="1008" y1="793" x2="1032" y2="793" stroke="#c23a44" stroke-width="1.3" /><rect x="1072.5" y="746" width="24" height="93" fill="none" stroke="#e29aa0" stroke-width="1.1" /><line x1="1072.5" y1="746" x2="1072.5" y2="839" stroke="#c23a44" stroke-width="1.5" /><line x1="1096.5" y1="746" x2="1096.5" y2="839" stroke="#e0b0b4" stroke-width="1.2" /><line x1="1072.5" y1="793" x2="1096.5" y2="793" stroke="#c23a44" stroke-width="1.3" /><rect x="1136" y="746" width="24" height="93" fill="none" stroke="#e29aa0" stroke-width="1.1" /><line x1="1136" y1="746" x2="1136" y2="839" stroke="#c23a44" stroke-width="1.5" /><line x1="1160" y1="746" x2="1160" y2="839" stroke="#e0b0b4" stroke-width="1.2" /><line x1="1136" y1="793" x2="1160" y2="793" stroke="#c23a44" stroke-width="1.3" /><path d="M977.5 746 L993.5 746 Q996.5 746 996.5 749 L996.5 762 Q996.5 765 993.5 765 L977.5 765 Z" fill="none" stroke="#c23a44" stroke-width="1.4"/><line x1="979.5" y1="748" x2="979.5" y2="763" stroke="#e29aa0" stroke-width="1" /><path d="M977.5 770 L993.5 770 Q996.5 770 996.5 773 L996.5 786 Q996.5 789 993.5 789 L977.5 789 Z" fill="none" stroke="#c23a44" stroke-width="1.4"/><line x1="979.5" y1="772" x2="979.5" y2="787" stroke="#e29aa0" stroke-width="1" /><path d="M977.5 793 L993.5 793 Q996.5 793 996.5 796 L996.5 809 Q996.5 812 993.5 812 L977.5 812 Z" fill="none" stroke="#c23a44" stroke-width="1.4"/><line x1="979.5" y1="795" x2="979.5" y2="810" stroke="#e29aa0" stroke-width="1" /><path d="M977.5 816 L993.5 816 Q996.5 816 996.5 819 L996.5 832 Q996.5 835 993.5 835 L977.5 835 Z" fill="none" stroke="#c23a44" stroke-width="1.4"/><line x1="979.5" y1="818" x2="979.5" y2="833" stroke="#e29aa0" stroke-width="1" /><path d="M1040 746 L1056 746 Q1059 746 1059 749 L1059 762 Q1059 765 1056 765 L1040 765 Z" fill="none" stroke="#c23a44" stroke-width="1.4"/><line x1="1042" y1="748" x2="1042" y2="763" stroke="#e29aa0" stroke-width="1" /><path d="M1040 770 L1056 770 Q1059 770 1059 773 L1059 786 Q1059 789 1056 789 L1040 789 Z" fill="none" stroke="#c23a44" stroke-width="1.4"/><line x1="1042" y1="772" x2="1042" y2="787" stroke="#e29aa0" stroke-width="1" /><path d="M1040 793 L1056 793 Q1059 793 1059 796 L1059 809 Q1059 812 1056 812 L1040 812 Z" fill="none" stroke="#c23a44" stroke-width="1.4"/><line x1="1042" y1="795" x2="1042" y2="810" stroke="#e29aa0" stroke-width="1" /><path d="M1040 816 L1056 816 Q1059 816 1059 819 L1059 832 Q1059 835 1056 835 L1040 835 Z" fill="none" stroke="#c23a44" stroke-width="1.4"/><line x1="1042" y1="818" x2="1042" y2="833" stroke="#e29aa0" stroke-width="1" /><path d="M1104 746 L1120 746 Q1123 746 1123 749 L1123 762 Q1123 765 1120 765 L1104 765 Z" fill="none" stroke="#c23a44" stroke-width="1.4"/><line x1="1106" y1="748" x2="1106" y2="763" stroke="#e29aa0" stroke-width="1" /><path d="M1104 770 L1120 770 Q1123 770 1123 773 L1123 786 Q1123 789 1120 789 L1104 789 Z" fill="none" stroke="#c23a44" stroke-width="1.4"/><line x1="1106" y1="772" x2="1106" y2="787" stroke="#e29aa0" stroke-width="1" /><path d="M1104 793 L1120 793 Q1123 793 1123 796 L1123 809 Q1123 812 1120 812 L1104 812 Z" fill="none" stroke="#c23a44" stroke-width="1.4"/><line x1="1106" y1="795" x2="1106" y2="810" stroke="#e29aa0" stroke-width="1" /><path d="M1104 816 L1120 816 Q1123 816 1123 819 L1123 832 Q1123 835 1120 835 L1104 835 Z" fill="none" stroke="#c23a44" stroke-width="1.4"/><line x1="1106" y1="818" x2="1106" y2="833" stroke="#e29aa0" stroke-width="1" /><path d="M1167 746 L1183 746 Q1186 746 1186 749 L1186 762 Q1186 765 1183 765 L1167 765 Z" fill="none" stroke="#c23a44" stroke-width="1.4"/><line x1="1169" y1="748" x2="1169" y2="763" stroke="#e29aa0" stroke-width="1" /><path d="M1167 770 L1183 770 Q1186 770 1186 773 L1186 786 Q1186 789 1183 789 L1167 789 Z" fill="none" stroke="#c23a44" stroke-width="1.4"/><line x1="1169" y1="772" x2="1169" y2="787" stroke="#e29aa0" stroke-width="1" /><path d="M1167 793 L1183 793 Q1186 793 1186 796 L1186 809 Q1186 812 1183 812 L1167 812 Z" fill="none" stroke="#c23a44" stroke-width="1.4"/><line x1="1169" y1="795" x2="1169" y2="810" stroke="#e29aa0" stroke-width="1" /><path d="M1167 816 L1183 816 Q1186 816 1186 819 L1186 832 Q1186 835 1183 835 L1167 835 Z" fill="none" stroke="#c23a44" stroke-width="1.4"/><line x1="1169" y1="818" x2="1169" y2="833" stroke="#e29aa0" stroke-width="1" /><rect x="1279" y="657.6" width="38" height="37.4" fill="none" stroke="#c23a44" stroke-width="1.6" /><rect x="1282" y="660.6" width="32" height="31.4" fill="none" stroke="#e29aa0" stroke-width="1.1" /><circle cx="1342" cy="685.4" r="16" fill="none" stroke="#8a6a70" stroke-width="1.2" stroke-dasharray="3 1"/><circle cx="1356" cy="776.7" r="16" fill="none" stroke="#8a6a70" stroke-width="1.2" stroke-dasharray="3 1"/><polygon points="1373.6,620.9 1403.1,641.6 1382.4,671.1 1352.9,650.4" fill="none" stroke="#c23a44" stroke-width="1.3" /><polygon points="1374.3,625.1 1398.9,642.3 1381.7,666.9 1357.1,649.7" fill="none" stroke="#e29aa0" stroke-width="1" stroke-dasharray="3 1.5"/><polygon points="1377.0,683.0 1410.0,702.0 1391.0,735.0 1358.0,716.0" fill="none" stroke="#c23a44" stroke-width="1.3" /><polygon points="1378.1,687.1 1405.9,703.1 1389.9,730.9 1362.1,714.9" fill="none" stroke="#e29aa0" stroke-width="1" stroke-dasharray="3 1.5"/><polygon points="1289.6,771.7 1326.3,781.6 1316.4,818.3 1279.7,808.4" fill="none" stroke="#c23a44" stroke-width="1.3" /><polygon points="1291.7,775.4 1322.6,783.7 1314.3,814.6 1283.4,806.3" fill="none" stroke="#e29aa0" stroke-width="1" stroke-dasharray="3 1.5"/><polygon points="1393.3,780.5 1424.5,802.3 1402.7,833.5 1371.5,811.7" fill="none" stroke="#c23a44" stroke-width="1.3" /><polygon points="1394.1,784.7 1420.3,803.1 1401.9,829.3 1375.7,810.9" fill="none" stroke="#e29aa0" stroke-width="1" stroke-dasharray="3 1.5"/><rect x="1261" y="703" width="11" height="13" fill="none" stroke="#c8c8c8" stroke-width="1" /><path d="M1341 568 A30 30 0 0 0 1371 597" fill="none" stroke="#d6d6d6" stroke-width="1.2"/><line x1="1371" y1="568" x2="1371" y2="597" stroke="#d6d6d6" stroke-width="1.2" /><path d="M1232 852 A30 30 0 0 0 1262 882" fill="none" stroke="#dadada" stroke-width="1.2"/><line x1="1262" y1="852" x2="1262" y2="882" stroke="#dadada" stroke-width="1.2" /><polygon points="884,800 896,795 902,806 890,811" fill="none" stroke="#888" stroke-width="1.2" /><text x="959.5" y="414.5" font-family="Liberation Sans" font-size="33" fill="#5d5cbc" textLength="107.5" lengthAdjust="spacingAndGlyphs">Room 1</text><text x="1248.5" y="372.5" font-family="Liberation Sans" font-size="33" fill="#5d5cbc" textLength="108.5" lengthAdjust="spacingAndGlyphs">Room 2</text><text x="1229" y="528" font-family="Liberation Sans" font-size="33" fill="#5d5cbc" textLength="108.5" lengthAdjust="spacingAndGlyphs">Room 3</text><text x="1086.5" y="715.5" font-family="Liberation Sans" font-size="33" fill="#5d5cbc" textLength="108.5" lengthAdjust="spacingAndGlyphs">Room 4</text></svg>
<!--ENDPLAN-->
<!-- view toolbar items -->
<svg style="left:466px;top:108px" width="36" height="28"><path d="M3 24 L10 19 L34 19 L28 25 Z" fill="#1e8a1e"/><rect x="9" y="8" width="12" height="14" fill="#f0f0f0"/><path d="M9 8 L13 5 L24 5 L21 8Z" fill="#fafafa"/><circle cx="25" cy="16" r="3.5" fill="#e0e0e0"/></svg>
<div class="t" style="left:512px;top:114px;font-size:14px">Site 1</div>
<svg style="left:567px;top:107px" width="28" height="27"><path d="M3 7 L8 2 L25 2 L25 20 L20 25 L3 25 Z" fill="#3cb83c" stroke="#a8f0a8" stroke-width="1"/><path d="M3 7 L20 7 L25 2" fill="none" stroke="#b8f8b8" stroke-width="1"/><line x1="20" y1="7" x2="20" y2="25" stroke="#b8f8b8"/><rect x="4" y="11" width="15" height="3" fill="#1a6a1a"/><rect x="4" y="17" width="15" height="3" fill="#1a6a1a"/></svg>
<div class="t" style="left:600px;top:114px;font-size:14px">Building 1</div>
<div class="a" style="left:674px;top:102px;width:101px;height:35px;background:#2e2e2e;border:1px solid #4a4a4a"></div>
<svg style="left:680px;top:107px" width="28" height="27"><path d="M3 7 L8 2 L25 2 L25 20 L20 25 L3 25 Z" fill="#3a3a3a" stroke="#e0e0e0" stroke-width="1.3"/><path d="M3 7 L20 7 L25 2" fill="none" stroke="#e0e0e0" stroke-width="1.3"/><line x1="20" y1="7" x2="20" y2="25" stroke="#e0e0e0" stroke-width="1.3"/><rect x="4" y="15" width="15" height="4" fill="#30c030"/><line x1="3" y1="12" x2="20" y2="12" stroke="#ccc"/><line x1="3" y1="20" x2="20" y2="20" stroke="#ccc"/></svg>
<div class="t" style="left:712px;top:114px;font-size:14px">Storey 1</div>
<svg style="left:783px;top:107px" width="34" height="26"><path d="M2 6 L8 2 L32 2 L32 17 L26 23 L2 23 Z" fill="none" stroke="#e0e0e0" stroke-width="1.3"/><path d="M2 6 L2 23" stroke="#e0e0e0"/><rect x="5" y="17" width="22" height="5" fill="#222"/><rect x="12" y="4" width="3" height="10" fill="none" stroke="#ddd"/><line x1="26" y1="6" x2="26" y2="23" stroke="#ccc"/><line x1="2" y1="6" x2="26" y2="6" stroke="#ccc"/></svg>
<div class="t" style="left:823px;top:114px;font-size:14px">Room 1</div>
<svg style="left:885px;top:119px" width="8" height="5"><path d="M0 0 L8 0 L4 5Z" fill="#c8c8c8"/></svg>
<div class="a" style="left:919px;top:102px;width:2px;height:36px;background:#4a4a4a"></div>
<svg style="left:939px;top:107px" width="26" height="26"><path d="M2 5 L6 2 L24 2 L24 19 L20 24 L2 24 Z" fill="#2aa82a"/><path d="M2 5 L20 5 L24 2" fill="none" stroke="#60e060"/><path d="M20 5 L24 2 L24 19 L20 24Z" fill="#137a13"/><rect x="3" y="6" width="16" height="17" fill="#30b830"/></svg>
<div class="a" style="left:976px;top:102px;width:40px;height:35px;background:#2e2e2e;border:1px solid #4a4a4a"></div>
<svg style="left:983px;top:108px" width="26" height="25"><path d="M2 2 L10 2 L10 13 L23 13 L23 22 L2 22 Z" fill="#1e9a1e" stroke="#7ee07e" stroke-width="1.5"/></svg>
<svg style="left:1025px;top:118px" width="4" height="6"><path d="M0 0 L4 3 L0 6Z" fill="#999"/></svg>
<div class="a" style="left:1048px;top:102px;width:2px;height:36px;background:#4a4a4a"></div>
<svg style="left:1073px;top:109px" width="24" height="23"><g fill="none" stroke="#ececec" stroke-width="2"><path d="M1 6 L1 1 L6 1"/><path d="M18 1 L23 1 L23 6"/><path d="M1 17 L1 22 L6 22"/><path d="M23 17 L23 22 L18 22"/></g><rect x="7" y="6" width="10" height="11" fill="#3e3e3e" opacity="0.5"/><rect x="8" y="7" width="8" height="9" fill="#f4f4f4"/></svg>
<svg style="left:1123px;top:108px" width="30" height="24"><g stroke="#f0f0f0" fill="none" stroke-width="1.5"><line x1="2" y1="1" x2="2" y2="9"/><line x1="27" y1="1" x2="27" y2="9"/><line x1="3" y1="5" x2="26" y2="5"/><path d="M2 16 L2 22 M2 16 L27 16 L27 22 M8 16 L8 21 M14 16 L14 21 M20 16 L20 21"/></g><path d="M3 5 L8 2 L8 8Z M26 5 L21 2 L21 8Z" fill="#f0f0f0"/></svg>
<div class="a" style="left:1849px;top:102px;width:2px;height:36px;background:#555"></div>
<svg style="left:1871px;top:108px" width="28" height="24"><rect x="1.5" y="1.5" width="24" height="16" fill="#2e2e2e" stroke="#f0f0f0" stroke-width="2"/><rect x="9" y="19" width="10" height="3" fill="#e8e8e8"/></svg>

<svg style="left:0;top:0" width="1920" height="1080"><line x1="501.5" y1="140" x2="501.5" y2="152" stroke="#555" stroke-width="2"/><line x1="540.5" y1="140" x2="540.5" y2="152" stroke="#555" stroke-width="2"/><line x1="579.5" y1="140" x2="579.5" y2="152" stroke="#555" stroke-width="2"/><line x1="618.5" y1="140" x2="618.5" y2="152" stroke="#555" stroke-width="2"/><line x1="657.5" y1="140" x2="657.5" y2="163" stroke="#4a4a4a" stroke-width="1.6"/><text x="660" y="162" font-size="10" fill="#505050" stroke="#505050" stroke-width="0.25" font-family="Liberation Sans">-5,00</text><line x1="696.5" y1="140" x2="696.5" y2="152" stroke="#555" stroke-width="2"/><line x1="735.5" y1="140" x2="735.5" y2="152" stroke="#555" stroke-width="2"/><line x1="774.5" y1="140" x2="774.5" y2="152" stroke="#555" stroke-width="2"/><line x1="813.5" y1="140" x2="813.5" y2="152" stroke="#555" stroke-width="2"/><line x1="852.5" y1="140" x2="852.5" y2="163" stroke="#4a4a4a" stroke-width="1.6"/><text x="855" y="162" font-size="10" fill="#505050" stroke="#505050" stroke-width="0.25" font-family="Liberation Sans">0,00</text><line x1="891.5" y1="140" x2="891.5" y2="152" stroke="#555" stroke-width="2"/><line x1="930.5" y1="140" x2="930.5" y2="152" stroke="#555" stroke-width="2"/><line x1="969.5" y1="140" x2="969.5" y2="152" stroke="#555" stroke-width="2"/><line x1="1008.5" y1="140" x2="1008.5" y2="152" stroke="#555" stroke-width="2"/><line x1="1047.5" y1="140" x2="1047.5" y2="163" stroke="#4a4a4a" stroke-width="1.6"/><text x="1050" y="162" font-size="10" fill="#505050" stroke="#505050" stroke-width="0.25" font-family="Liberation Sans">5,00</text><line x1="1086.5" y1="140" x2="1086.5" y2="152" stroke="#555" stroke-width="2"/><line x1="1125.5" y1="140" x2="1125.5" y2="152" stroke="#555" stroke-width="2"/><line x1="1164.5" y1="140" x2="1164.5" y2="152" stroke="#555" stroke-width="2"/><line x1="1203.5" y1="140" x2="1203.5" y2="152" stroke="#555" stroke-width="2"/><line x1="1242.5" y1="140" x2="1242.5" y2="163" stroke="#4a4a4a" stroke-width="1.6"/><text x="1245" y="162" font-size="10" fill="#505050" stroke="#505050" stroke-width="0.25" font-family="Liberation Sans">10,00</text><line x1="1281.5" y1="140" x2="1281.5" y2="152" stroke="#555" stroke-width="2"/><line x1="1320.5" y1="140" x2="1320.5" y2="152" stroke="#555" stroke-width="2"/><line x1="1359.5" y1="140" x2="1359.5" y2="152" stroke="#555" stroke-width="2"/><line x1="1398.5" y1="140" x2="1398.5" y2="152" stroke="#555" stroke-width="2"/><line x1="1437.5" y1="140" x2="1437.5" y2="163" stroke="#4a4a4a" stroke-width="1.6"/><text x="1440" y="162" font-size="10" fill="#505050" stroke="#505050" stroke-width="0.25" font-family="Liberation Sans">15,00</text><line x1="1476.5" y1="140" x2="1476.5" y2="152" stroke="#555" stroke-width="2"/><line x1="1515.5" y1="140" x2="1515.5" y2="152" stroke="#555" stroke-width="2"/><line x1="1554.5" y1="140" x2="1554.5" y2="152" stroke="#555" stroke-width="2"/><line x1="1593.5" y1="140" x2="1593.5" y2="152" stroke="#555" stroke-width="2"/><line x1="1632.5" y1="140" x2="1632.5" y2="163" stroke="#4a4a4a" stroke-width="1.6"/><text x="1635" y="162" font-size="10" fill="#505050" stroke="#505050" stroke-width="0.25" font-family="Liberation Sans">20,00</text><line x1="1671.5" y1="140" x2="1671.5" y2="152" stroke="#555" stroke-width="2"/><line x1="1710.5" y1="140" x2="1710.5" y2="152" stroke="#555" stroke-width="2"/><line x1="1749.5" y1="140" x2="1749.5" y2="152" stroke="#555" stroke-width="2"/><line x1="1788.5" y1="140" x2="1788.5" y2="152" stroke="#555" stroke-width="2"/><line x1="1827.5" y1="140" x2="1827.5" y2="163" stroke="#4a4a4a" stroke-width="1.6"/><text x="1830" y="162" font-size="10" fill="#505050" stroke="#505050" stroke-width="0.25" font-family="Liberation Sans">25,00</text><line x1="1866.5" y1="140" x2="1866.5" y2="152" stroke="#555" stroke-width="2"/><line x1="1905.5" y1="140" x2="1905.5" y2="152" stroke="#555" stroke-width="2"/><line x1="450" y1="170.5" x2="462" y2="170.5" stroke="#555" stroke-width="2"/><line x1="450" y1="209.5" x2="462" y2="209.5" stroke="#555" stroke-width="2"/><line x1="450" y1="248.5" x2="472" y2="248.5" stroke="#4a4a4a" stroke-width="1.6"/><text x="-245" y="470" font-size="10" fill="#777" font-family="Liberation Sans" transform="rotate(-90)">0,00</text><line x1="450" y1="287.5" x2="462" y2="287.5" stroke="#555" stroke-width="2"/><line x1="450" y1="326.5" x2="462" y2="326.5" stroke="#555" stroke-width="2"/><line x1="450" y1="365.5" x2="462" y2="365.5" stroke="#555" stroke-width="2"/><line x1="450" y1="404.5" x2="462" y2="404.5" stroke="#555" stroke-width="2"/><line x1="450" y1="443.5" x2="472" y2="443.5" stroke="#4a4a4a" stroke-width="1.6"/><text x="-440" y="470" font-size="10" fill="#777" font-family="Liberation Sans" transform="rotate(-90)">-5,00</text><line x1="450" y1="482.5" x2="462" y2="482.5" stroke="#555" stroke-width="2"/><line x1="450" y1="521.5" x2="462" y2="521.5" stroke="#555" stroke-width="2"/><line x1="450" y1="560.5" x2="462" y2="560.5" stroke="#555" stroke-width="2"/><line x1="450" y1="599.5" x2="462" y2="599.5" stroke="#555" stroke-width="2"/><line x1="450" y1="638.5" x2="472" y2="638.5" stroke="#4a4a4a" stroke-width="1.6"/><text x="-635" y="470" font-size="10" fill="#777" font-family="Liberation Sans" transform="rotate(-90)">-10,00</text><line x1="450" y1="677.5" x2="462" y2="677.5" stroke="#555" stroke-width="2"/><line x1="450" y1="716.5" x2="462" y2="716.5" stroke="#555" stroke-width="2"/><line x1="450" y1="755.5" x2="462" y2="755.5" stroke="#555" stroke-width="2"/><line x1="450" y1="794.5" x2="462" y2="794.5" stroke="#555" stroke-width="2"/><line x1="450" y1="833.5" x2="472" y2="833.5" stroke="#4a4a4a" stroke-width="1.6"/><text x="-830" y="470" font-size="10" fill="#777" font-family="Liberation Sans" transform="rotate(-90)">-15,00</text><line x1="450" y1="872.5" x2="462" y2="872.5" stroke="#555" stroke-width="2"/><line x1="450" y1="911.5" x2="462" y2="911.5" stroke="#555" stroke-width="2"/><line x1="450" y1="950.5" x2="462" y2="950.5" stroke="#555" stroke-width="2"/><line x1="450" y1="989.5" x2="462" y2="989.5" stroke="#555" stroke-width="2"/><line x1="450" y1="1028.5" x2="472" y2="1028.5" stroke="#4a4a4a" stroke-width="1.6"/><text x="-1025" y="470" font-size="10" fill="#777" font-family="Liberation Sans" transform="rotate(-90)">-20,00</text></svg>
<!--POPUP-->
<!-- popup -->
<div class="a" style="left:439px;top:471px;width:506px;height:324px;background:#1c1c1c"></div>
<div class="a" style="left:443px;top:475px;width:498px;height:29px;background:linear-gradient(#8c8c8c,#7e7e7e 60%,#787878)"></div>
<div class="t" style="left:450px;top:483px;font-size:14px">Apertures</div>
<div class="a" style="left:443px;top:504px;width:498px;height:2px;background:#555"></div>
<div class="a" style="left:443px;top:506px;width:498px;height:26px;background:linear-gradient(#808080,#767676)"></div>
<div class="a" style="left:443px;top:506px;width:87px;height:28px;background:linear-gradient(#7e7e7e,#767676)"></div>
<div class="a" style="left:530px;top:506px;width:106px;height:26px;background:linear-gradient(#8e8e8e,#808080);border-left:1px solid #5a5a5a;border-right:2px solid #505050;border-bottom:2px solid #505050"></div>
<div class="a" style="left:452px;top:515px;width:11px;height:11px;border-radius:50%;background:radial-gradient(circle at 45% 40%,#fff 0,#eee 35%,#aaa 80%,rgba(150,150,150,0) 100%)"></div>
<div class="t" style="left:470px;top:513px;font-size:14px">Objects</div>
<svg style="left:539px;top:512px" width="14" height="14"><path d="M7 1 L8.8 5.2 L13 5.5 L9.8 8.3 L10.8 12.5 L7 10.2 L3.2 12.5 L4.2 8.3 L1 5.5 L5.2 5.2Z" fill="#e8e8e8"/></svg>
<div class="t" style="left:558px;top:513px;font-size:14px">Favourites</div>
<div class="a" style="left:530px;top:532px;width:411px;height:2px;background:#505050"></div>
<div class="a" style="left:443px;top:534px;width:498px;height:33px;background:linear-gradient(#6c6c6c,#646464)"></div>
<div class="a" style="left:449px;top:538px;width:202px;height:26px;background:linear-gradient(#4a4a4a,#545454);border:1px solid #3a3a3a;border-radius:2px"></div>
<div class="t" style="left:454px;top:544px;font-size:14px;font-style:italic;color:#e4e4e4">Search</div>
<svg style="left:629px;top:542px" width="20" height="20"><circle cx="12" cy="7" r="5" fill="none" stroke="#f0f0f0" stroke-width="1.8"/><line x1="8.5" y1="10.5" x2="2" y2="17" stroke="#f0f0f0" stroke-width="2.2"/></svg>
<div class="a" style="left:897px;top:543px;width:17px;height:16px;border:2px solid #f0f0f0"></div>
<div class="a" style="left:901px;top:548px;width:9px;height:5px;background:#f4f4f4"></div>
<div class="a" style="left:920px;top:543px;width:15px;height:16px;background:#767676;opacity:0.6"></div>
<div class="a" style="left:443px;top:567px;width:498px;height:1px;background:#5a5a5a"></div>
<div class="a" style="left:443px;top:568px;width:498px;height:194px;background:linear-gradient(170deg,#888,#8a8a8a 50%,#909090)"></div>
<div class="a" style="left:918px;top:569px;width:20px;height:191px;background:linear-gradient(90deg,#4e4e4e,#5a5a5a);border-radius:2px"></div>
<div class="a" style="left:921px;top:574px;width:14px;height:160px;background:linear-gradient(90deg,#5c5c5c,#686868);border-radius:2px"></div>
<div class="a" style="left:919px;top:736px;width:18px;height:23px;background:#4a4a4a"></div>
<svg style="left:922px;top:740px" width="12" height="18"><path d="M3 5 L9 5 L6 2Z M2 11 L10 11 L6 16Z" fill="#2e2e2e"/></svg>
<div class="a" style="left:451px;top:576px;width:85px;height:58px;background:#030303"></div>
<svg style="left:451px;top:576px" width="85" height="58"><rect x="25" y="12" width="34" height="34" fill="#2e2e2e" stroke="#dedede" stroke-width="2.2"/><line x1="25" y1="22" x2="59" y2="22" stroke="#dedede" stroke-width="2"/><line x1="36.5" y1="22" x2="36.5" y2="46" stroke="#dedede" stroke-width="2"/><line x1="47.5" y1="22" x2="47.5" y2="46" stroke="#dedede" stroke-width="2"/><rect x="26" y="13" width="32" height="8" fill="#3a3a3a"/><g fill="#8a8a8a" font-family="Liberation Sans" font-size="5.5"><text x="30" y="10">1.500 m</text><text x="31" y="54">0.025 m</text><text x="0" y="0" transform="translate(22 38) rotate(-90)">1.200 m</text><rect x="19" y="13" width="2" height="2"/><rect x="19" y="44" width="2" height="2"/><rect x="58" y="50" width="3" height="2"/><rect x="63" y="50" width="3" height="2"/></g></svg>
<div class="a" style="left:450px;top:633px;width:87px;height:29px;background:#7e7e7e"></div><div class="a" style="left:451px;top:634px;width:85px;height:27px;background:linear-gradient(#6e6e6e,#686868)"></div>
<div class="t" style="left:457px;top:641px;font-size:14px">3-wing wi...</div>
<div class="a" style="left:542px;top:576px;width:85px;height:58px;background:#030303"></div>
<svg style="left:542px;top:576px" width="85" height="58"><path d="M33 46 L33 25 A11 11 0 0 1 55 25 L55 46 Z" fill="#2e2e2e" stroke="#dedede" stroke-width="2.2"/><g fill="#8a8a8a" font-family="Liberation Sans" font-size="5.5"><text x="30" y="10">1.500 m</text><text x="31" y="54">0.025 m</text><text x="0" y="0" transform="translate(22 38) rotate(-90)">1.200 m</text><rect x="19" y="13" width="2" height="2"/><rect x="19" y="44" width="2" height="2"/><rect x="58" y="50" width="3" height="2"/><rect x="63" y="50" width="3" height="2"/></g></svg>
<div class="a" style="left:541px;top:633px;width:87px;height:29px;background:#7e7e7e"></div><div class="a" style="left:542px;top:634px;width:85px;height:27px;background:linear-gradient(#6e6e6e,#686868)"></div>
<div class="t" style="left:548px;top:641px;font-size:14px">Arched w...</div>
<div class="a" style="left:631px;top:574px;width:89px;height:89px;border:2px solid #c47a44;background:#383838"></div>
<div class="a" style="left:633px;top:576px;width:85px;height:58px;background:#030303"></div>
<svg style="left:633px;top:576px" width="85" height="58"><rect x="39" y="12" width="17" height="36" fill="#ececec"/><g fill="#8a8a8a" font-family="Liberation Sans" font-size="5.5"><text x="30" y="10">1.500 m</text><text x="31" y="54">0.025 m</text><text x="0" y="0" transform="translate(22 38) rotate(-90)">1.200 m</text><rect x="19" y="13" width="2" height="2"/><rect x="19" y="44" width="2" height="2"/><rect x="58" y="50" width="3" height="2"/><rect x="63" y="50" width="3" height="2"/></g></svg>
<div class="a" style="left:633px;top:634px;width:85px;height:27px;background:#3c3c3c"></div>
<div class="t" style="left:639px;top:641px;font-size:14px">Door (sta...</div>
<div class="a" style="left:724px;top:576px;width:85px;height:58px;background:#030303"></div>
<svg style="left:724px;top:576px" width="85" height="58"><circle cx="42" cy="28.5" r="14" fill="#2e2e2e" stroke="#dedede" stroke-width="6"/><g fill="#8a8a8a" font-family="Liberation Sans" font-size="5.5"><text x="30" y="10">1.500 m</text><text x="31" y="54">0.025 m</text><text x="0" y="0" transform="translate(22 38) rotate(-90)">1.200 m</text><rect x="19" y="13" width="2" height="2"/><rect x="19" y="44" width="2" height="2"/><rect x="58" y="50" width="3" height="2"/><rect x="63" y="50" width="3" height="2"/></g></svg>
<div class="a" style="left:723px;top:633px;width:87px;height:29px;background:#7e7e7e"></div><div class="a" style="left:724px;top:634px;width:85px;height:27px;background:linear-gradient(#6e6e6e,#686868)"></div>
<div class="t" style="left:730px;top:641px;font-size:14px">Round wi...</div>
<div class="a" style="left:815px;top:576px;width:85px;height:58px;background:#030303"></div>
<svg style="left:815px;top:576px" width="85" height="58"><rect x="26" y="12.5" width="34" height="33" fill="#2e2e2e" stroke="#dedede" stroke-width="2.2"/><g fill="#8a8a8a" font-family="Liberation Sans" font-size="5.5"><text x="30" y="10">1.500 m</text><text x="31" y="54">0.025 m</text><text x="0" y="0" transform="translate(22 38) rotate(-90)">1.200 m</text><rect x="19" y="13" width="2" height="2"/><rect x="19" y="44" width="2" height="2"/><rect x="58" y="50" width="3" height="2"/><rect x="63" y="50" width="3" height="2"/></g></svg>
<div class="a" style="left:814px;top:633px;width:87px;height:29px;background:#7e7e7e"></div><div class="a" style="left:815px;top:634px;width:85px;height:27px;background:linear-gradient(#6e6e6e,#686868)"></div>
<div class="t" style="left:821px;top:641px;font-size:14px">Skylight (...</div>
<div class="a" style="left:451px;top:667px;width:85px;height:58px;background:#030303"></div>
<svg style="left:451px;top:667px" width="85" height="58"><rect x="25" y="12" width="38" height="35" fill="#2e2e2e" stroke="#dedede" stroke-width="2.2"/><line x1="44" y1="12" x2="44" y2="47" stroke="#dedede" stroke-width="2.2"/><g fill="#8a8a8a" font-family="Liberation Sans" font-size="5.5"><text x="30" y="10">1.500 m</text><text x="31" y="54">0.025 m</text><text x="0" y="0" transform="translate(22 38) rotate(-90)">1.200 m</text><rect x="19" y="13" width="2" height="2"/><rect x="19" y="44" width="2" height="2"/><rect x="58" y="50" width="3" height="2"/><rect x="63" y="50" width="3" height="2"/></g></svg>
<div class="a" style="left:450px;top:724px;width:87px;height:29px;background:#7e7e7e"></div><div class="a" style="left:451px;top:725px;width:85px;height:27px;background:linear-gradient(#6e6e6e,#686868)"></div>
<div class="t" style="left:457px;top:732px;font-size:14px">Square w...</div>
<div class="a" style="left:542px;top:667px;width:85px;height:58px;background:#030303"></div>
<svg style="left:542px;top:667px" width="85" height="58"><rect x="33" y="12" width="22" height="35" fill="#2e2e2e" stroke="#dedede" stroke-width="2.2"/><line x1="33" y1="24" x2="55" y2="24" stroke="#dedede" stroke-width="2.2"/><g fill="#8a8a8a" font-family="Liberation Sans" font-size="5.5"><text x="30" y="10">1.500 m</text><text x="31" y="54">0.025 m</text><text x="0" y="0" transform="translate(22 38) rotate(-90)">1.200 m</text><rect x="19" y="13" width="2" height="2"/><rect x="19" y="44" width="2" height="2"/><rect x="58" y="50" width="3" height="2"/><rect x="63" y="50" width="3" height="2"/></g></svg>
<div class="a" style="left:541px;top:724px;width:87px;height:29px;background:#7e7e7e"></div><div class="a" style="left:542px;top:725px;width:85px;height:27px;background:linear-gradient(#6e6e6e,#686868)"></div>
<div class="t" style="left:548px;top:732px;font-size:14px">Square w...</div>
<div class="a" style="left:633px;top:667px;width:85px;height:58px;background:#030303"></div>
<svg style="left:633px;top:667px" width="85" height="58"><rect x="30" y="12" width="25" height="35" fill="#2e2e2e" stroke="#dedede" stroke-width="2.2"/><g fill="#8a8a8a" font-family="Liberation Sans" font-size="5.5"><text x="30" y="10">1.500 m</text><text x="31" y="54">0.025 m</text><text x="0" y="0" transform="translate(22 38) rotate(-90)">1.200 m</text><rect x="19" y="13" width="2" height="2"/><rect x="19" y="44" width="2" height="2"/><rect x="58" y="50" width="3" height="2"/><rect x="63" y="50" width="3" height="2"/></g></svg>
<div class="a" style="left:632px;top:724px;width:87px;height:29px;background:#7e7e7e"></div><div class="a" style="left:633px;top:725px;width:85px;height:27px;background:linear-gradient(#6e6e6e,#686868)"></div>
<div class="t" style="left:639px;top:732px;font-size:14px">Window (...</div>
<div class="a" style="left:443px;top:762px;width:498px;height:1px;background:#5c5c5c"></div>
<div class="a" style="left:443px;top:763px;width:498px;height:28px;background:linear-gradient(#646464,#5c5c5c)"></div>
<div class="a" style="left:448px;top:771px;width:11px;height:10px;background:#3a3a3a;border:1px solid #888"></div>
<div class="a" style="left:467px;top:774px;width:87px;height:4px;background:#d8d8d8;border-radius:2px;box-shadow:0 1px 1px #444"></div>
<div class="a" style="left:497px;top:769px;width:13px;height:13px;border-radius:50%;background:#c8c8c8;border:1px solid #555"></div>
<div class="a" style="left:501px;top:773px;width:5px;height:5px;border-radius:50%;background:#555"></div>
<div class="a" style="left:562px;top:768px;width:20px;height:16px;background:#cfcfcf;border:1px solid #444"></div>
<svg style="left:563px;top:769px" width="18" height="14"><circle cx="9" cy="5" r="3.2" fill="#222"/><path d="M2 14 Q9 5 16 14Z" fill="#222"/></svg>
<!--ENDPOPUP-->


<!-- ============ STATUS BAR ============ -->
<div class="a" style="left:0;top:1054px;width:1920px;height:6px;background:#2a2a2a"></div>
<div class="a" style="left:4px;top:1060px;width:1913px;height:20px;background:#3a3a3a"></div>
<div class="t" style="left:15px;top:1066px;font-size:11px;color:#d0d0d0;letter-spacing:-0.6px">DIAL<b style="color:#f4f4f4">ux</b> evo</div>
<div class="a" style="left:1741px;top:1065px;width:12px;height:13px;background:#e8e8e8"></div>
<div class="a" style="left:1744px;top:1065px;width:6px;height:4px;background:#3a3a3a"></div>
<div class="t" style="left:1761px;top:1066px;font-size:12px;color:#e0e0e0">Report translation error (F11)</div>
</body></html>
